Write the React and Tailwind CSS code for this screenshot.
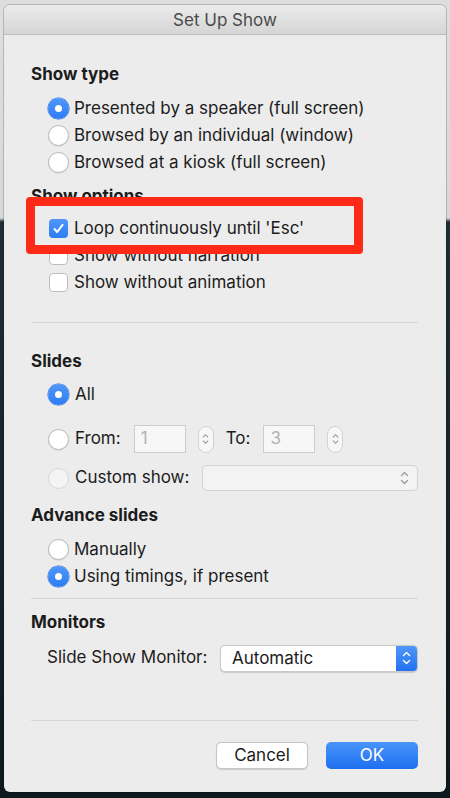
import React from "react";

function Radio({ checked, disabled }) {
  if (checked) {
    return (
      <span className="w-[21px] h-[21px] rounded-full bg-[linear-gradient(#4f97fa,#2d7cf4)] shadow-[0_0_0_0.5px_#2a6fd8] flex items-center justify-center shrink-0">
        <span className="w-[7px] h-[7px] rounded-full bg-white" />
      </span>
    );
  }
  return (
    <span
      className={`w-[21px] h-[21px] rounded-full shrink-0 border ${
        disabled ? "bg-[#f4f4f4] border-[#d6d6d6]" : "bg-white border-[#b9b9b9] shadow-[0_0.5px_1px_rgba(0,0,0,0.12)]"
      }`}
    />
  );
}

function Checkbox({ checked }) {
  if (checked) {
    return (
      <span className="w-[19px] h-[19px] rounded-[4px] bg-[linear-gradient(#4f97fa,#2d7cf4)] flex items-center justify-center shrink-0">
        <svg width="13" height="13" viewBox="0 0 13 13" fill="none">
          <path d="M2.5 7 L5.2 10 L10.5 2.8" stroke="white" strokeWidth="2" strokeLinecap="round" strokeLinejoin="round" />
        </svg>
      </span>
    );
  }
  return <span className="w-[19px] h-[19px] rounded-[4px] bg-white border border-[#bdbdbd] shrink-0" />;
}

function Chevrons({ color = "#8a8a8a", w = 9, h = 16 }) {
  return (
    <svg width={w} height={h} viewBox="0 0 9 16" fill="none">
      <path d="M1.5 5.5 L4.5 2.5 L7.5 5.5" stroke={color} strokeWidth="1.4" strokeLinecap="round" strokeLinejoin="round" />
      <path d="M1.5 10.5 L4.5 13.5 L7.5 10.5" stroke={color} strokeWidth="1.4" strokeLinecap="round" strokeLinejoin="round" />
    </svg>
  );
}

function Stepper() {
  return (
    <span className="w-[16px] h-[27px] rounded-full border border-[#d2d2d2] bg-[#f7f7f7] flex items-center justify-center shrink-0">
      <Chevrons color="#9a9a9a" w={7} h={14} />
    </span>
  );
}

function Heading({ children }) {
  return <div className="h-[24px] flex items-center font-bold text-[17px] text-[#1c1c1c]">{children}</div>;
}

function Row({ children, h = "h-[27px]" }) {
  return <div className={`${h} flex items-center pl-[17px]`}>{children}</div>;
}

function Sep() {
  return <div className="h-px bg-[#d6d6d6]" />;
}

export default function App() {
  return (
    <div
      className="w-[450px] h-[798px] overflow-hidden pt-[5px] pl-[4px] bg-[linear-gradient(#dedede_0,#d8d8d8_218px,#1f2e35_222px,#0e191e_100%)]"
      style={{ fontFamily: "Inter, 'Liberation Sans', sans-serif" }}
    >
      <div className="relative w-[442px] h-[787px] rounded-[6px] bg-[#ececec] overflow-hidden shadow-[0_0_0_1px_rgba(0,0,0,0.18)]">
        <div className="h-[30px] pt-[2px] flex items-center justify-center bg-[linear-gradient(#ebebeb,#d5d5d5)] border-b border-[#bdbdbd] text-[17px] text-[#4a4a4a]">
          Set Up Show
        </div>

        <div className="pl-[27px] pr-[28px] text-[17px] text-[#1c1c1c]">
          <div className="pt-[28px]">
            <Heading>Show type</Heading>
          </div>
          <div className="mt-[8px]">
            <Row>
              <Radio checked />
              <span className="ml-[5px]">Presented by a speaker (full screen)</span>
            </Row>
            <Row>
              <Radio />
              <span className="ml-[5px]">Browsed by an individual (window)</span>
            </Row>
            <Row>
              <Radio />
              <span className="ml-[5px]">Browsed at a kiosk (full screen)</span>
            </Row>
          </div>

          <div className="mt-[9px]">
            <Heading>Show options</Heading>
          </div>
          <div className="mt-[6px]">
            <Row>
              <span className="ml-[1px] flex items-center">
                <Checkbox checked />
                <span className="ml-[6px]">Loop continuously until 'Esc'</span>
              </span>
            </Row>
            <Row>
              <span className="ml-[1px] flex items-center">
                <Checkbox />
                <span className="ml-[6px]">Show without narration</span>
              </span>
            </Row>
            <Row>
              <span className="ml-[1px] flex items-center">
                <Checkbox />
                <span className="ml-[6px]">Show without animation</span>
              </span>
            </Row>
          </div>

          <div className="mt-[26px]">
            <Sep />
          </div>

          <div className="mt-[27px]">
            <Heading>Slides</Heading>
          </div>
          <div className="mt-[7px]">
            <Row>
              <Radio checked />
              <span className="ml-[6px]">All</span>
            </Row>
          </div>
          <div className="mt-[17px]">
            <Row h="h-[28px]">
              <Radio />
              <span className="ml-[6px]">From:</span>
              <span className="ml-[13px] w-[52px] h-[28px] border border-[#cdcdcd] bg-[#f7f7f7] text-[#b3b3b3] flex items-center pl-[6px]">
                1
              </span>
              <span className="ml-[12px] flex">
                <Stepper />
              </span>
              <span className="ml-[12px]">To:</span>
              <span className="ml-[13px] w-[52px] h-[28px] border border-[#cdcdcd] bg-[#f7f7f7] text-[#b3b3b3] flex items-center pl-[6px]">
                3
              </span>
              <span className="ml-[12px] flex">
                <Stepper />
              </span>
            </Row>
          </div>
          <div className="mt-[11px]">
            <Row h="h-[28px]">
              <Radio disabled />
              <span className="ml-[6px]">Custom show:</span>
              <span className="ml-auto w-[216px] h-[26px] rounded-[5px] border border-[#d3d3d3] bg-[#f3f3f3] flex items-center justify-end pr-[8px]">
                <Chevrons color="#9c9c9c" />
              </span>
            </Row>
          </div>

          <div className="mt-[12px]">
            <Heading>Advance slides</Heading>
          </div>
          <div className="mt-[8px]">
            <Row>
              <Radio />
              <span className="ml-[5px]">Manually</span>
            </Row>
            <Row>
              <Radio checked />
              <span className="ml-[5px]">Using timings, if present</span>
            </Row>
          </div>

          <div className="mt-[8px]">
            <Sep />
          </div>

          <div className="mt-[12px]">
            <Heading>Monitors</Heading>
          </div>
          <div className="mt-[9px] h-[28px] flex items-center pl-[16px]">
            <span>Slide Show Monitor:</span>
            <span className="ml-auto w-[198px] h-[27px] rounded-[5px] bg-white border border-[#c9c9c9] shadow-[0_0.5px_1px_rgba(0,0,0,0.15)] flex items-stretch overflow-hidden">
              <span className="flex-1 flex items-center pl-[11px] pt-[2px]">Automatic</span>
              <span className="w-[21px] bg-[linear-gradient(#4f97fa,#2471f0)] flex items-center justify-center">
                <Chevrons color="white" />
              </span>
            </span>
          </div>

          <div className="mt-[48px]">
            <Sep />
          </div>

          <div className="mt-[21px] flex justify-end gap-[18px]">
            <button className="w-[92px] h-[27px] rounded-[5px] bg-white border border-[#c6c6c6] shadow-[0_0.5px_1px_rgba(0,0,0,0.15)] text-[17px] text-[#1c1c1c]">
              Cancel
            </button>
            <button className="w-[92px] h-[27px] rounded-[5px] bg-[linear-gradient(#4a95fa,#1f6ff0)] text-[17px] text-white">
              OK
            </button>
          </div>
        </div>

        <div className="absolute left-[22px] top-[192px] w-[337px] h-[57px] border-[9px] border-[#fe2a17] rounded-[4px]" />
      </div>
    </div>
  );
}
